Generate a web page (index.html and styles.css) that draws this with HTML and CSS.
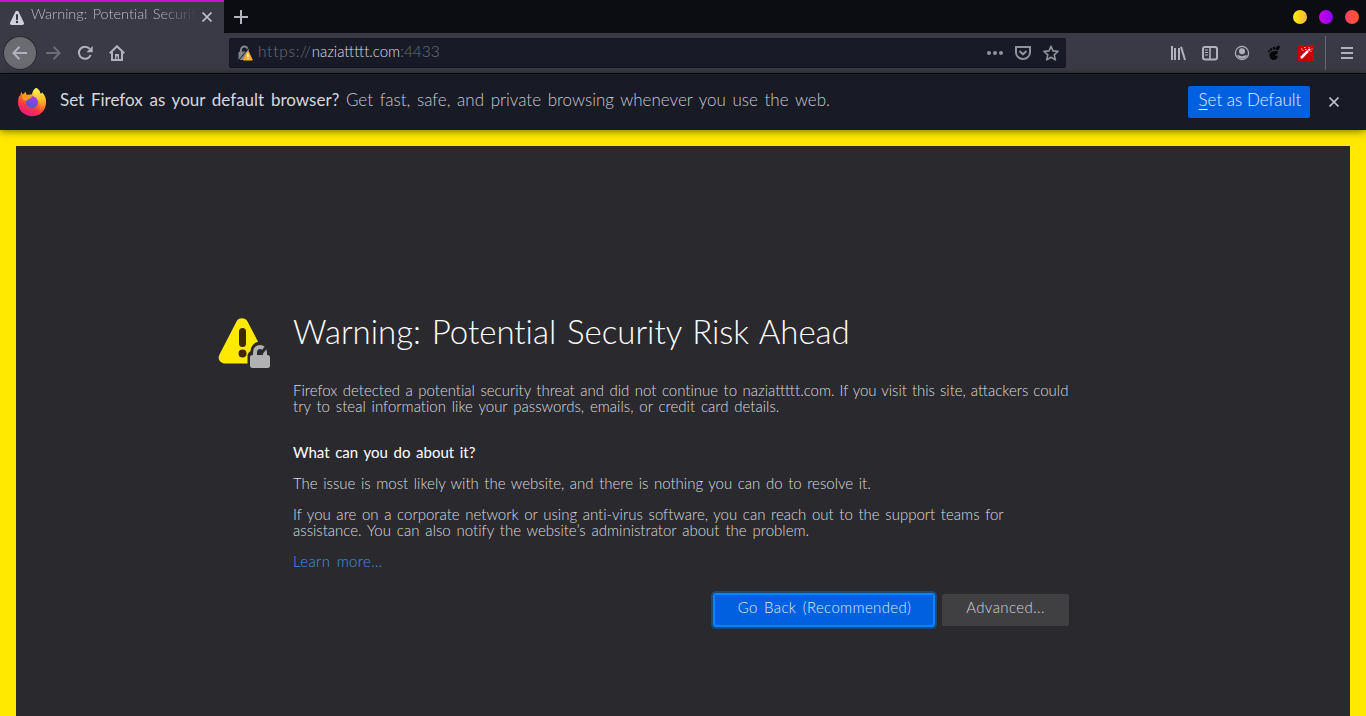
FILE: index.html
```html
<!DOCTYPE html>
<html lang="en">
<head>
<meta charset="utf-8">
<title>Warning: Potential Security Risk Ahead</title>
<link rel="stylesheet" href="styles.css">
</head>
<body>
<div class="tabbar">
  <div class="tab">
    <svg class="tab-warn" width="16" height="16" viewBox="0 0 16 16"><path fill="#d0d0da" d="M6.500 1.600a1.700 1.700 0 0 1 3 0l5.300 10.900a1.700 1.700 0 0 1-1.500 2.500H2.700a1.700 1.700 0 0 1-1.500-2.500z"/><path d="M8 5v4.300" stroke="#30303a" stroke-width="1.900" stroke-linecap="round"/><circle cx="8" cy="12" r="1.200" fill="#30303a"/></svg>
    <span class="tab-title">Warning: Potential Security</span>
    <svg class="tab-close" width="12" height="12" viewBox="0 0 12 12"><path d="M1.500 1.500l9 9m0-9l-9 9" stroke="#c5c5cf" stroke-width="1.700"/></svg>
  </div>
  <svg class="new-tab" width="16" height="16" viewBox="0 0 16 16"><path d="M8 1v14M1 8h14" stroke="#b5b5c0" stroke-width="2"/></svg>
  <div class="window-buttons"><i class="min"></i><i class="max"></i><i class="close"></i></div>
</div>
<div class="toolbar">
  <div class="nav">
    <span class="back"><svg width="16" height="16" viewBox="0 0 16 16"><path d="M15 8H1.500M7.500 1.800L1.300 8l6.200 6.200" class="line thick"/></svg></span>
    <svg class="forward" width="16" height="16" viewBox="0 0 16 16"><path d="M1 8h13.500M8.500 1.800L14.700 8l-6.200 6.200" class="line thick"/></svg>
    <svg width="16" height="16" viewBox="0 0 16 16"><path d="M12.700 3.800A6.100 6.100 0 1 0 13.700 10" class="line thick"/><path d="M15.700 1v6.200H9.500z" fill="#b1b1bd"/></svg>
    <svg width="16" height="16" viewBox="0 0 16 16"><path d="M.8 8.200L8 1.200l7.200 7M3 7v8h10V7" class="line thick"/><path d="M6 14V9h4v5H8.700v-2.500H7.300V14z" fill="#b1b1bd"/></svg>
  </div>
  <div class="urlbar">
    <svg class="lock" width="16" height="16" viewBox="0 0 16 16"><path d="M4 7V4.800a3.400 3.400 0 0 1 6.800 0V7" fill="none" stroke="#85858f" stroke-width="2"/><rect x="1.500" y="6.500" width="11" height="8.500" rx="1.500" fill="#85858f"/><path d="M2 15L12.500 2" stroke="#181b27" stroke-width="1"/><path d="M10.400 6.800h1L15.300 15H6.500z" fill="#ffb01b" stroke="#ffb01b" stroke-width="1" stroke-linejoin="round"/><path d="M10.900 8.700v3.200m0 1.200v1.200" stroke="#fff" stroke-width="1.300"/></svg>
    <span class="url"><span class="scheme">https://</span><b>naziattttt.com</b><span>:4433</span></span>
    <div class="page-actions">
      <svg width="16" height="16" viewBox="0 0 16 16"><g fill="#92929c"><circle cx="2" cy="8" r="2"/><circle cx="8" cy="8" r="2"/><circle cx="14" cy="8" r="2"/></g></svg>
      <svg width="16" height="16" viewBox="0 0 16 16"><path d="M1 2h14v5.500a7 6.500 0 0 1-14 0zM4.500 6L8 9.300 11.500 6" class="line dim thick"/></svg>
      <svg width="16" height="16" viewBox="0 0 16 16"><path d="M8 1.200l2 4.700 5 .5-3.800 3.500 1.200 5L8 12.300l-4.400 2.600 1.200-5L1 6.400l5-.5z" class="line dim" stroke-linejoin="round"/></svg>
    </div>
  </div>
  <div class="tools">
    <svg width="16" height="16" viewBox="0 0 16 16"><path d="M2 1v14M5 3v12M9 3v12M11 1.700L15 15" class="line thick"/></svg>
    <svg width="16" height="16" viewBox="0 0 16 16"><rect x="1" y="2" width="14" height="12.500" rx="2" class="line thick"/><path d="M8 2v12" class="line"/><path d="M3 5h3M3 7.500h3M3 10h3" class="line thin"/></svg>
    <svg width="16" height="16" viewBox="0 0 16 16"><circle cx="8" cy="8" r="6.600" class="line thin"/><circle cx="8" cy="6.200" r="3" fill="#b1b1bd"/><path d="M3 10.500q2-.8 3 .3 2 1 4 0 1-1.100 3-.3a5.600 5.600 0 0 1-10 0" fill="#b1b1bd"/></svg>
    <svg width="16" height="16" viewBox="0 0 16 16"><g fill="#050507"><ellipse cx="11.700" cy="3" rx="1.700" ry="2.500" transform="rotate(40 11.700 3)"/><ellipse cx="8" cy="3.300" rx="1.200" ry="1.700"/><ellipse cx="5.100" cy="4.500" rx="1" ry="1.400"/><ellipse cx="3" cy="6.300" rx=".8" ry="1.200"/><path d="M3.500 9C4 6.500 11.500 4.500 12 7.300c.3 2-3.500 2-3 3.200.4.800 1.800-.4 2.500.4 1.200 1.500-2 4.400-4.500 4C4.500 14.500 3 11.500 3.500 9z"/></g></svg>
    <svg width="16" height="16" viewBox="0 0 16 16"><path d="M0 0h16v16H0z" fill="#c80000"/><path d="M3 13l7-7" stroke="#fff" stroke-width="2.500"/><path d="M10.500 5.500l1.500-1.500" stroke="#fff" stroke-width="2"/><path d="M3 4h1.500M6 2.500h1.500M7 4.500h1.500M11 2v1M13.500 4h1M12.500 6.500h1M4.500 5.500h1" stroke="#ffc0c0" stroke-width="1"/></svg>
  </div>
  <div class="menu"><svg width="12" height="12" viewBox="0 0 12 12"><path d="M0 1h12M0 6h12M0 11h12" class="line thick"/></svg></div>
</div>
<div class="notice">
  <svg class="firefox" width="30" height="30" viewBox="0 0 30 30">
    <defs>
      <linearGradient id="flame" x1=".8" y1="0" x2=".3" y2="1"><stop offset="0" stop-color="#fff44f"/><stop offset=".4" stop-color="#ff980e"/><stop offset=".7" stop-color="#ff3647"/><stop offset="1" stop-color="#e31587"/></linearGradient>
      <linearGradient id="tail" x1=".4" y1="0" x2=".5" y2="1"><stop offset="0" stop-color="#fff44f"/><stop offset=".5" stop-color="#ffbd2f"/><stop offset="1" stop-color="#ff7139" stop-opacity="0"/></linearGradient>
      <radialGradient id="globe" cx=".65" cy=".2" r=".7"><stop offset="0" stop-color="#a03be8"/><stop offset="1" stop-color="#5b55cc"/></radialGradient>
    </defs>
    <path fill="url(#flame)" d="M4.300 4.500l1.200 3 2-1.400 1-1.700 1 3.300 5-.3L19 1c3 1.300 4 3.200 4.500 6 1-.3 1.500-.8 1.500-1.500 3 3 4.200 6.700 4 10.500C28.500 24 23 29.200 15 29.200S1 23 1 15.500c0-3 .5-5 1.500-7l.5 1z"/>
    <path fill="url(#tail)" d="M19 1c3 1.300 4 3.200 4.500 6 1-.3 1.500-.8 1.500-1.500 3 3 4.200 6.700 4 10.500-1 6-4 8-7 9 2-5 1-10-2-13-2-2-4-3-4.500-5.500C15.400 4 17 2 19 1z"/>
    <circle cx="15" cy="15.300" r="6" fill="url(#globe)"/>
    <path fill="#ff9a20" d="M5 8.500c2.500-1.200 5-.8 7 .6l3.500.3c-.5 1.400-2.300 1.600-3 2.300-.5.800-2 .8-3 1.800C7 13.500 5 11.500 5 8.500z"/>
  </svg>
  <p class="notice-text"><b>Set Firefox as your default browser?</b> <span>Get fast, safe, and private browsing whenever you use the web.</span></p>
  <button class="default"><u>S</u>et as Default</button>
  <svg class="dismiss" width="12" height="12" viewBox="0 0 12 12"><path d="M1.500 1.500l9 9m0-9l-9 9" stroke="#c5c5cf" stroke-width="1.700"/></svg>
</div>
<main class="page">
  <div class="content">
    <svg class="warning" width="54" height="54" viewBox="0 0 54 54"><path fill="#ffe900" d="M18.500 4.500C20.500.2 27.300.2 29.500 4.500L48 40q2 6-5 6.500H8c-5.500 0-9-4-6.500-9z"/><path d="M24.500 14.500v12" stroke="#3e2800" stroke-width="7" stroke-linecap="round"/><circle cx="24.500" cy="36.500" r="4" fill="#3e2800"/><path fill="#2a2a2e" d="M29.500 54V38q1-3 3-4c1-7 5-9 9-9.500h12V54z"/><path d="M37 40v-4.500c0-7.500 10-7.500 10 0V40" fill="none" stroke="#b1b1b3" stroke-width="4"/><path d="M41 39l9-11" stroke="#2a2a2e" stroke-width="3"/><rect x="32" y="38" width="20" height="13" rx="2.500" fill="#b1b1b3"/></svg>
    <div class="message">
      <h1>Warning: Potential Security Risk Ahead</h1>
      <p class="intro"><span class="l1">Firefox detected a potential security threat and did not continue to </span><span class="l1b">naziattttt.com. If you visit this site, attackers could</span><br><span class="l2">try to steal information like your passwords, emails, or credit card details.</span></p>
      <h2>What can you do about it?</h2>
      <p><span class="l3">The issue is most likely with the website, and there is nothing you can do to resolve it.</span></p>
      <p><span class="l4">If you are on a corporate network or using anti-virus software, you can reach out to the support teams for</span><br><span class="l5">assistance. You can also notify the website’s administrator about the problem.</span></p>
      <p class="learn"><a>Learn more…</a></p>
      <div class="buttons"><button class="primary">Go Back (Recommended)</button><button class="secondary">Advanced...</button></div>
    </div>
  </div>
</main>
</body>
</html>
```
FILE: styles.css
```css
* { box-sizing: border-box; }
body { margin: 0; height: 716px; overflow: hidden; display: flex; flex-direction: column; font-family: Lato, sans-serif; font-weight: 300; background: #2a2a2e; }
svg { display: block; flex: none; }
p, h1, h2 { margin: 0; white-space: nowrap; }
button { border: 0; padding: 0; font: inherit; white-space: nowrap; }
.line { fill: none; stroke: #b1b1bd; stroke-width: 1.6; }
.thick { stroke-width: 2; }
.thin { stroke-width: 1.2; }
.dim { stroke: #92929c; }
.tabbar { height: 33px; flex: none; display: flex; align-items: center; background: #0c0d12; }
.tab { width: 224px; height: 33px; display: flex; align-items: center; padding: 0 11px 0 9px; background: #393a45; border-top: 2px solid #c312d2; }
.tab-title { width: 165px; margin: -7px 5px 0 6px; overflow: hidden; white-space: nowrap; font-size: 14.5px; line-height: 20px; word-spacing: 1.5px; font-variant-ligatures: none; color: #bcbcc4; mask-image: linear-gradient(90deg, #000 78%, transparent); }
.tab-close { margin-top: -1px; }
.new-tab { margin-left: 9px; }
.window-buttons { display: flex; gap: 12px; margin-left: auto; padding-right: 7px; }
.window-buttons i { width: 14px; height: 14px; border-radius: 50%; }
.min { background: linear-gradient(90deg, #fff000, #ffb347); }
.max { background: linear-gradient(90deg, #cf00e0, #8c00ff); }
.close { background: linear-gradient(90deg, #ff3f6c, #ff5a25); }
.toolbar { height: 41px; flex: none; display: flex; align-items: center; background: #393a45; border-bottom: 1px solid #0c0d12; }
.nav { width: 229px; display: flex; gap: 16px; align-items: center; padding-left: 4px; }
.back { width: 32px; height: 32px; display: grid; place-items: center; border-radius: 50%; background: #6b6b72; box-shadow: 0 0 0 1px #2b2c34; margin-right: -7px; }
.forward { opacity: .42; }
.urlbar { width: 837px; height: 30px; display: flex; align-items: center; padding: 0 7px 0 8px; border-radius: 3px; background: #181b27; box-shadow: 0 0 0 1px #151721 inset; }
.url { margin: -5px 0 0 5px; font-size: 15.5px; line-height: 20px; color: #6c6e79; white-space: nowrap; }
.url b { font-size: 15px; font-weight: 300; color: #dcdce2; }
.scheme { letter-spacing: .7px; }
.page-actions { display: flex; gap: 12px; margin-left: auto; }
.tools { display: flex; gap: 16px; margin-left: 104px; }
.menu { height: 34px; display: flex; align-items: center; margin-left: 11px; padding-left: 15px; border-left: 1px solid #666772; }
.notice { position: relative; z-index: 1; height: 56px; flex: none; display: flex; align-items: center; padding: 0 26px 0 17px; background: #181a26; box-shadow: 0 1px 8px rgba(0,0,0,.55); }
.notice-text { margin: -4px 0 0 13px; font-size: 17px; line-height: 22px; word-spacing: 2.05px; color: #c8c9d1; }
.notice-text b { font-weight: 400; word-spacing: 2.4px; color: #d7d8df; }
.default { width: 122px; height: 32px; margin-left: auto; padding: 0 0 5px 2px; border-radius: 2px; background: #0060df; color: #e4efff; font-size: 17px; }
.default u { text-underline-offset: 3px; text-decoration-thickness: 1px; text-decoration-skip-ink: none; }
.dismiss { margin-left: 18px; }
.page { flex: 1; border: solid #ffe900; border-width: 16px 16px 0; background: #2a2a2e; }
.content { display: flex; padding: 171px 0 0 202px; color: #dcdcdf; }
.message { width: 776px; margin-left: 21px; font-size: 15px; line-height: 16px; }
h1 { margin-top: -7px; font-size: 33px; line-height: 42px; font-weight: 300; word-spacing: 1.8px; font-variant-ligatures: none; color: #fff; }
.intro { margin-top: 30px; }
.l1, .l2, .l3, .l4, .l5 { font-variant-ligatures: none; }
.l1 { word-spacing: 1.4px; }
.l1b { word-spacing: .9px; }
.l2 { word-spacing: 1.8px; }
.l3 { word-spacing: 1.5px; }
.l4 { word-spacing: 1.55px; }
.l5 { word-spacing: 1.85px; }
h2 { margin: 30px 0 15px; font-size: 15px; line-height: 16px; font-weight: 400; word-spacing: 1.8px; color: #fff; }
.message p + p { margin-top: 15px; }
.learn { color: #4390e4; letter-spacing: .35px; word-spacing: 2px; }
.buttons { display: flex; justify-content: flex-end; gap: 8px; margin-top: 25px; }
.buttons button { height: 32px; padding-bottom: 6px; border-radius: 2px; font-size: 15px; }
.buttons .primary { width: 220px; padding-left: 1px; background: #0060df; color: #dcebff; letter-spacing: .35px; word-spacing: 2px; box-shadow: inset 0 0 0 1px #0a84ff, 0 0 0 1px #0a84ff, 0 0 0 3px rgba(10,132,255,.35); }
.secondary { width: 127px; background: #404042; color: #d5d5d8; letter-spacing: .4px; }
```
